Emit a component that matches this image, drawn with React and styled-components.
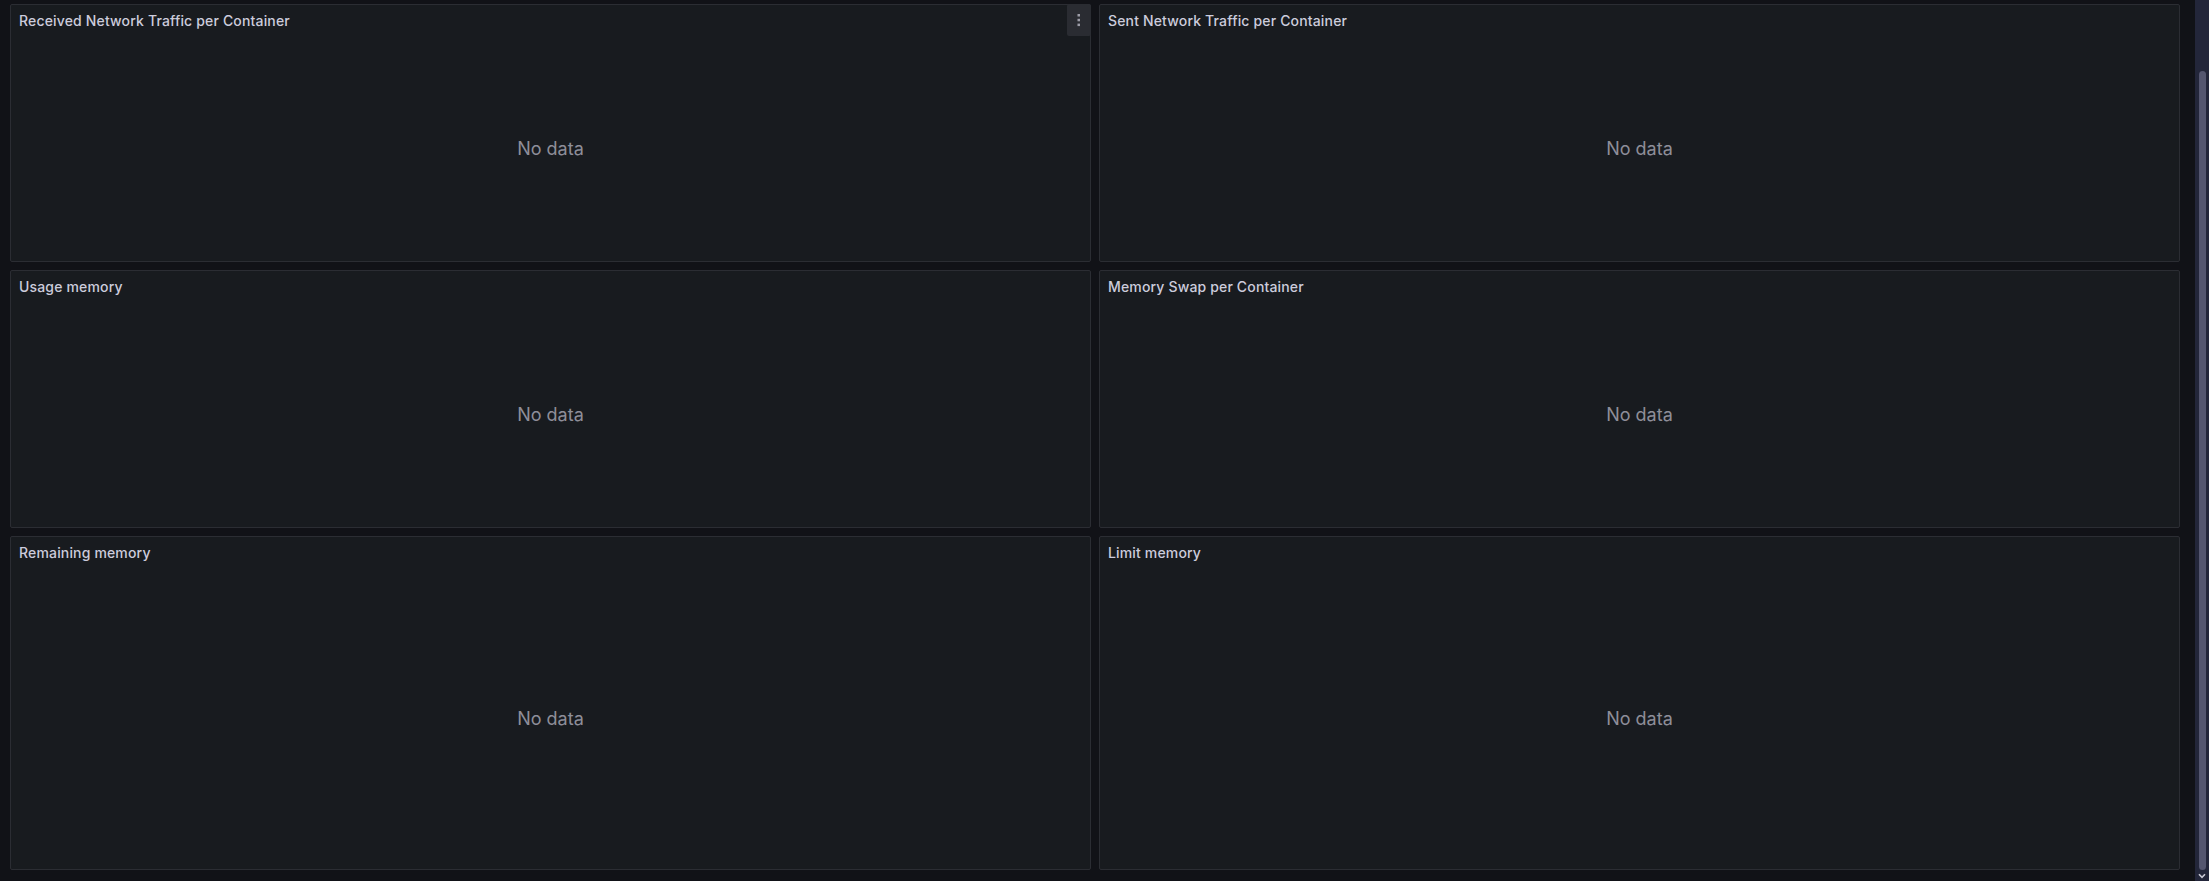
import React from "react";
import styled, { createGlobalStyle } from "styled-components";

const Global = createGlobalStyle`
  html, body { margin: 0; padding: 0; background: #111217; overflow: hidden; }
  body { font-family: Inter, "Noto Sans", sans-serif; color: #ccccdc; }
  * { box-sizing: border-box; }
`;

const Page = styled.div`
  display: flex;
  width: 2209px;
  height: 881px;
  background: #111217;
`;

const Main = styled.main`
  flex: 1;
  padding: 4px 15px 0 10px;
`;

const Grid = styled.div`
  display: grid;
  grid-template-columns: 1fr 1fr;
  grid-template-rows: 258px 258px 334px;
  gap: 8px;
`;

const Panel = styled.section`
  position: relative;
  display: flex;
  flex-direction: column;
  background: #181b1f;
  border: 1px solid #2b2d33;
  border-radius: 2px;
  min-width: 0;
`;

const Header = styled.header`
  height: 32px;
  flex: none;
  display: flex;
  align-items: center;
  padding: 0 8px;
`;

const Title = styled.h2`
  margin: 0;
  font-size: 14px;
  font-weight: 500;
  letter-spacing: 0.16px;
  line-height: 22px;
  color: #ccccdc;
  white-space: nowrap;
`;

const MenuButton = styled.button`
  position: absolute;
  top: -1px;
  right: -1px;
  width: 24px;
  height: 32px;
  border: none;
  padding: 0;
  background: #2a2c32;
  border-radius: 2px;
  display: flex;
  align-items: center;
  justify-content: center;
  color: #9d9da8;
`;

const Body = styled.div`
  flex: 1;
  display: flex;
  align-items: center;
  justify-content: center;
  padding-bottom: 2px;
`;

const Empty = styled.div`
  font-size: 18px;
  font-weight: 400;
  color: #8e8e99;
`;

const Scrollbar = styled.div`
  width: 14px;
  flex: none;
  background: #23263a;
  display: flex;
  flex-direction: column;
  align-items: center;
  padding-top: 71px;
`;

const Thumb = styled.div`
  width: 7px;
  height: 799px;
  border-radius: 4px;
  background: #54566f;
`;

const Arrow = styled.div`
  flex: 1;
  display: flex;
  align-items: center;
  justify-content: center;
  color: #c8c8d4;
`;

const panels = [
  { title: "Received Network Traffic per Container", menu: true },
  { title: "Sent Network Traffic per Container" },
  { title: "Usage memory" },
  { title: "Memory Swap per Container" },
  { title: "Remaining memory" },
  { title: "Limit memory" },
];

function Dots() {
  return (
    <svg width="4" height="14" viewBox="0 0 4 14" fill="currentColor">
      <rect x="0.5" y="1" width="2.5" height="2.5" />
      <rect x="0.5" y="5.8" width="2.5" height="2.5" />
      <rect x="0.5" y="10.6" width="2.5" height="2.5" />
    </svg>
  );
}

export default function App() {
  return (
    <Page>
      <Global />
      <Main>
        <Grid>
          {panels.map((p) => (
            <Panel key={p.title}>
              <Header>
                <Title>{p.title}</Title>
              </Header>
              {p.menu && (
                <MenuButton aria-label="Menu">
                  <Dots />
                </MenuButton>
              )}
              <Body>
                <Empty>No data</Empty>
              </Body>
            </Panel>
          ))}
        </Grid>
      </Main>
      <Scrollbar>
        <Thumb />
        <Arrow>
          <svg width="8" height="6" viewBox="0 0 8 6" fill="none" stroke="currentColor" strokeWidth="1.6">
            <path d="M1 1.2 L4 4.4 L7 1.2" />
          </svg>
        </Arrow>
      </Scrollbar>
    </Page>
  );
}
